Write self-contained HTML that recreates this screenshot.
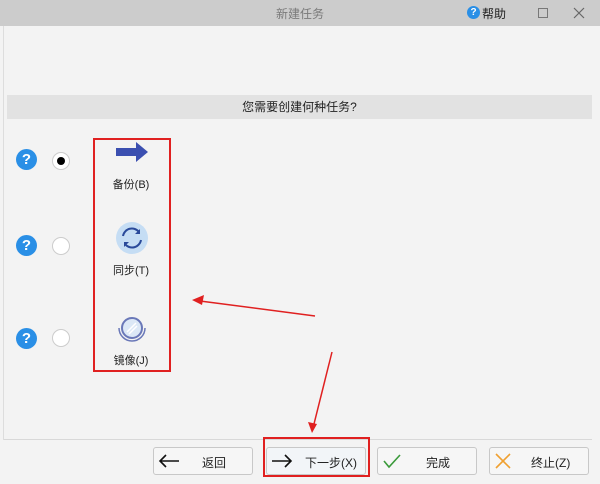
<!DOCTYPE html>
<html><head><meta charset="utf-8"><style>
body{margin:0;width:600px;height:484px;overflow:hidden;background:#f3f3f3;font-family:"Liberation Sans","Noto Sans CJK SC",sans-serif;position:relative}
.a{position:absolute}
.title{left:0;top:0;width:600px;height:26px;background:#cccccc}
.q{width:21px;height:21px;border-radius:50%;background:#2a8fe6;color:#fff;font-weight:bold;font-size:15px;text-align:center;line-height:21px}
.r{width:16px;height:16px;border-radius:50%;background:#fff;border:1px solid #ccc}
.btn{top:447px;width:98px;height:26px;border:1px solid #c8c8c8;border-radius:3px;background:#f6f6f6;font-size:12px;color:#222}
.lbl{font-size:11px;color:#222;width:76px;text-align:center}
</style></head><body>
<div class="a title"></div>
<div class="a" style="left:0;top:5px;width:600px;text-align:center;font-size:12px;color:#7a7a7a">新建任务</div>
<div class="a q" style="left:467px;top:6px;width:13px;height:13px;line-height:13px;font-size:10px">?</div>
<div class="a" style="left:482px;top:5px;font-size:12px;color:#222">帮助</div>
<div class="a" style="left:538px;top:8px;width:8px;height:8px;border:1px solid #777"></div>
<svg class="a" style="left:573px;top:7px" width="12" height="12"><path d="M1 1l10 10M11 1L1 11" stroke="#666" stroke-width="1.2"/></svg>
<div class="a" style="left:3px;top:26px;width:1px;height:414px;background:#ddd"></div>
<div class="a" style="left:7px;top:95px;width:585px;height:24px;background:#e2e2e2;text-align:center;font-size:12px;line-height:24px;color:#222">您需要创建何种任务?</div>

<div class="a q" style="left:16px;top:149px">?</div>
<div class="a q" style="left:16px;top:235px">?</div>
<div class="a q" style="left:16px;top:328px">?</div>
<div class="a r" style="left:52px;top:152px"><div style="width:8px;height:8px;border-radius:50%;background:#000;margin:4px"></div></div>
<div class="a r" style="left:52px;top:237px"></div>
<div class="a r" style="left:52px;top:329px"></div>

<div class="a" style="left:93px;top:138px;width:74px;height:230px;border:2px solid #e02020"></div>
<svg class="a" style="left:115px;top:140px" width="34" height="24"><path d="M1 8h20V2l12 10-12 10v-6H1z" fill="#3b4fb0"/></svg>
<div class="a lbl" style="left:93px;top:176px">备份(B)</div>
<svg class="a" style="left:115px;top:221px" width="34" height="34"><circle cx="17" cy="17" r="16" fill="#c5ddf4"/><path d="M8 15a9 9 0 0 1 16-4M26 19a9 9 0 0 1-16 4" stroke="#2a4a9a" stroke-width="2" fill="none"/><path d="M25 8v5h-5zM9 26v-5h5z" fill="#2a4a9a"/></svg>
<div class="a lbl" style="left:93px;top:262px">同步(T)</div>
<svg class="a" style="left:115px;top:314px" width="34" height="30"><circle cx="17" cy="14" r="10" fill="#dce8f6" stroke="#6a78b8" stroke-width="2"/><path d="M12 18l9-9M14 20l8-8" stroke="#fff" stroke-width="1.5"/><path d="M4 14a13 13 0 0 0 26 0" stroke="#6a78b8" stroke-width="1.5" fill="none"/></svg>
<div class="a lbl" style="left:93px;top:352px">镜像(J)</div>

<svg class="a" style="left:0;top:0" width="600" height="484"><path d="M315 316L200 301" stroke="#e02020" stroke-width="1.5"/><path d="M192 300l12-5-2 10z" fill="#e02020"/><path d="M332 352L314 424" stroke="#e02020" stroke-width="1.5"/><path d="M312 433l-4-11 9 2z" fill="#e02020"/></svg>

<div class="a" style="left:4px;top:439px;width:588px;height:1px;background:#d8d8d8"></div>
<div class="a btn" style="left:153px"><svg class="a" style="left:4px;top:6px" width="22" height="14"><path d="M2 7h19M8 1L2 7l6 6" stroke="#111" stroke-width="1.6" fill="none"/></svg><span class="a" style="left:48px;top:6px">返回</span></div>
<div class="a" style="left:263px;top:437px;width:107px;height:40px;border:2px solid #e02020;box-sizing:border-box"></div>
<div class="a btn" style="left:266px;background:#f2f5f8"><svg class="a" style="left:4px;top:6px" width="22" height="14"><path d="M1 7h19M14 1l6 6-6 6" stroke="#111" stroke-width="1.6" fill="none"/></svg><span class="a" style="left:38px;top:6px">下一步(X)</span></div>
<div class="a btn" style="left:377px"><svg class="a" style="left:5px;top:5px" width="18" height="16"><path d="M1 8l5 6L17 2" stroke="#3a9a3a" stroke-width="1.6" fill="none"/></svg><span class="a" style="left:48px;top:6px">完成</span></div>
<div class="a btn" style="left:489px"><svg class="a" style="left:4px;top:4px" width="18" height="18"><path d="M2 2l14 14M16 2L2 16" stroke="#f0a030" stroke-width="1.6"/></svg><span class="a" style="left:41px;top:6px">终止(Z)</span></div>
</body></html>
